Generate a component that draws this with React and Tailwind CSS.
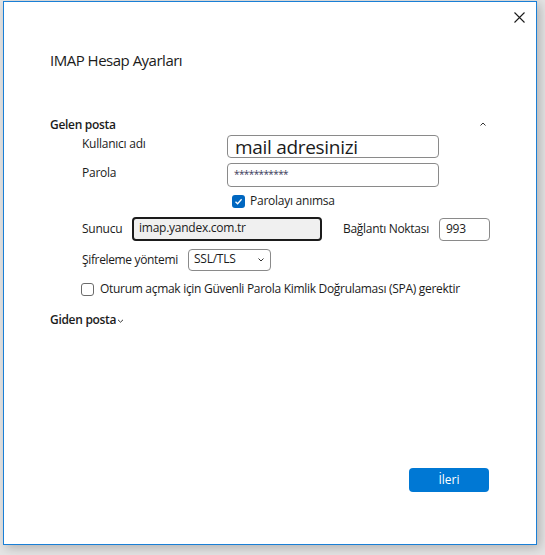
import React from 'react';

const font = { fontFamily: '"Open Sans", "Noto Sans", sans-serif' };

function Field({ className = '', children }) {
    return (
        <div className={`flex items-center rounded-[4px] border border-[#8a8a8a] bg-white ${className}`}>
            {children}
        </div>
    );
}

export default function App() {
    return (
        <div className="w-[545px] h-[555px] bg-[#e4e4e4] overflow-hidden text-[#1b1b1b]" style={font}>
            <div className="relative ml-[3px] mt-[1px] w-[534px] h-[544px] bg-white border border-[#1a7fd6] shadow-[3px_3px_10px_rgba(0,0,0,0.22)] flex flex-col">
                {/* close */}
                <button className="absolute right-[11px] top-[9px] w-[12px] h-[12px] flex items-center justify-center">
                    <svg width="11" height="11" viewBox="0 0 11 11">
                        <path d="M0.5 0.5 L10.5 10.5 M10.5 0.5 L0.5 10.5" stroke="#1b1b1b" strokeWidth="1.1" />
                    </svg>
                </button>

                <h1 className="ml-[46px] mt-[48px] text-[15px] leading-[20px] tracking-[-0.5px]">IMAP Hesap Ayarları</h1>

                <div className="ml-[46px] mr-[49px] mt-[47px] flex items-center justify-between">
                    <span className="text-[12px] leading-[16px] font-semibold tracking-[-0.3px]">Gelen posta</span>
                    <svg width="8" height="6" viewBox="0 0 8 6" className="mt-[-3px]">
                        <path d="M1.5 4.5 L4 2 L6.5 4.5" stroke="#333" strokeWidth="1" fill="none" />
                    </svg>
                </div>

                <div className="ml-[78px] mt-[2px] flex flex-col">
                    <div className="flex items-start">
                        <span className="w-[145px] pt-[1px] text-[12px] leading-[16px] tracking-[-0.25px]">Kullanıcı adı</span>
                        <Field className="w-[212px] h-[23px] pl-[7px]">
                            <span className="text-[19px] leading-[20px] tracking-[-0.3px]">mail adresinizi</span>
                        </Field>
                    </div>
                    <div className="flex items-start mt-[5px]">
                        <span className="w-[145px] pt-[2px] text-[12px] leading-[16px] tracking-[-0.25px]">Parola</span>
                        <Field className="w-[212px] h-[24px] pl-[6px] !items-start">
                            <span className="text-[10px] leading-[14px] mt-[3px] tracking-[-0.6px] text-[#3a3a5a]">***********</span>
                        </Field>
                    </div>
                    <div className="flex items-center mt-[6px] ml-[150px]">
                        <span className="w-[13px] h-[13px] rounded-[3px] bg-[#0067c0] flex items-center justify-center">
                            <svg width="9" height="9" viewBox="0 0 9 9">
                                <path d="M1.5 4.7 L3.6 6.7 L7.6 2.3" stroke="white" strokeWidth="1.3" fill="none" />
                            </svg>
                        </span>
                        <span className="ml-[5px] text-[12px] leading-[16px] tracking-[-0.25px]">Parolayı anımsa</span>
                    </div>

                    <div className="flex items-center mt-[8px]">
                        <span className="w-[50px] text-[12px] leading-[16px] tracking-[-0.25px]">Sunucu</span>
                        <div className="w-[190px] h-[24px] rounded-[4px] border-2 border-[#1b1b1b] bg-[#f0f0f0] pl-[5px] flex items-center">
                            <span className="text-[12px] leading-[16px] tracking-[-0.25px] mt-[-3px]">imap.yandex.com.tr</span>
                        </div>
                        <span className="ml-[21px] w-[96px] text-[12px] leading-[16px] tracking-[-0.3px]">Bağlantı Noktası</span>
                        <Field className="w-[51px] h-[23px] pl-[6px] !items-start">
                            <span className="text-[12px] leading-[16px] mt-[2px] tracking-[-0.25px]">993</span>
                        </Field>
                    </div>

                    <div className="flex items-center mt-[8px]">
                        <span className="w-[106px] text-[12px] leading-[16px] tracking-[-0.35px]">Şifreleme yöntemi</span>
                        <div className="w-[83px] h-[22px] rounded-[4px] border border-[#8a8a8a] bg-white pl-[5px] pr-[5px] flex items-center justify-between">
                            <span className="text-[12px] leading-[16px] tracking-[-0.25px] mt-[-2px]">SSL/TLS</span>
                            <svg width="8" height="6" viewBox="0 0 8 6">
                                <path d="M1.5 1.5 L4 4 L6.5 1.5" stroke="#333" strokeWidth="1" fill="none" />
                            </svg>
                        </div>
                    </div>

                    <div className="flex items-center mt-[10px] ml-[-1px]">
                        <span className="w-[13px] h-[13px] rounded-[3px] border border-[#6b6b6b] bg-white"></span>
                        <span className="ml-[6px] text-[12px] leading-[16px] tracking-[-0.3px]">Oturum açmak için Güvenli Parola Kimlik Doğrulaması (SPA) gerektir</span>
                    </div>
                </div>

                <div className="ml-[46px] mt-[15px] flex items-center">
                    <span className="text-[12px] leading-[16px] font-semibold tracking-[-0.3px]">Giden posta</span>
                    <svg width="7" height="6" viewBox="0 0 7 6" className="ml-[1px] mt-[1px]">
                        <path d="M1 1.8 L3.5 4.2 L6 1.8" stroke="#333" strokeWidth="1" fill="none" />
                    </svg>
                </div>

                <div className="flex-1" />

                <div className="flex justify-end mr-[47px] mb-[52px]">
                    <button className="w-[80px] h-[24px] rounded-[4px] bg-[#0078d4] text-white text-[12px] leading-[16px] flex items-center justify-center">
                        İleri
                    </button>
                </div>
            </div>
        </div>
    );
}
